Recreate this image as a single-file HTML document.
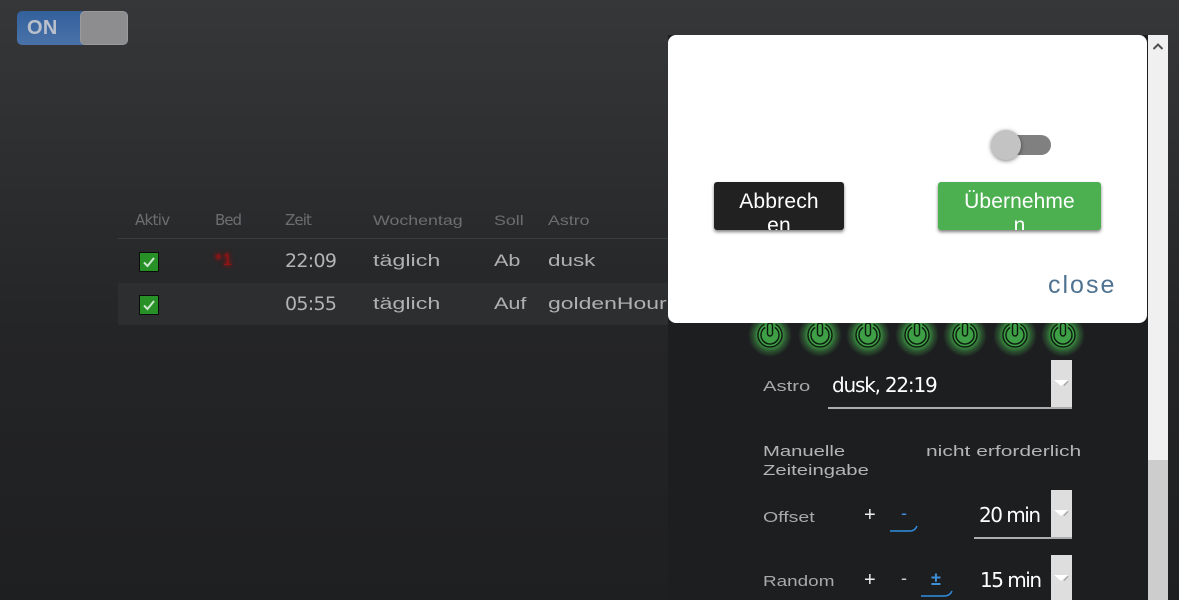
<!DOCTYPE html>
<html><head><meta charset="utf-8"><style>
html,body{margin:0;padding:0;width:1179px;height:600px;overflow:hidden;background:#1f2022}
#bg{position:absolute;left:0;top:0;width:1179px;height:600px;background:linear-gradient(#363739 0,#2b2c2e 200px,#242527 330px,#1e1f21 600px);overflow:hidden}
.t{position:absolute;white-space:nowrap;transform-origin:0 0;font-family:"Liberation Sans",sans-serif;line-height:20px}
.w{transform:scaleX(1.27)}
.r{transform:scaleX(1.37)}
.f{transform:scaleX(1.35);font-size:15px}
.s{font-family:"DejaVu Sans",sans-serif}
.m{letter-spacing:-1.500px}
.cb{position:absolute;left:139px;width:18px;height:18px;background:#279027;border:1px solid #0b0d0b;box-sizing:content-box}
.dd{position:absolute;left:1051px;width:21px;background:#dedede}
.dd:after{content:"";position:absolute;left:3px;top:20px;border-left:7px solid transparent;border-right:7px solid transparent;border-top:6px solid #fff}
.dd:before{content:"";position:absolute;left:12px;top:23px;width:6px;height:1px;background:#9a9a9a;transform:rotate(-45deg)}
</style></head><body><div id="bg">
<div style="position:absolute;left:17px;top:11px;width:111px;height:34px;border-radius:5px;background:linear-gradient(#33609c,#4a72a8);overflow:hidden;">
<div style="position:absolute;left:63px;top:0;width:48px;height:34px;background:#8d8d8f;border-radius:5px;box-sizing:border-box;border:1px solid #9a9a9a"></div></div>
<div class="t" style="left:27px;top:18px;font-size:20px;font-weight:bold;color:#b9c0cc;letter-spacing:.3px">ON</div>

<div style="position:absolute;left:118px;top:238px;width:550px;height:1px;background:#3c3d3f"></div>
<div style="position:absolute;left:118px;top:283px;width:550px;height:42px;background:#2d2e30"></div>

<div class="t s" style="left:135px;top:210px;font-size:15px;color:#6d6e70;letter-spacing:-.7px">Aktiv</div>
<div class="t s" style="left:215px;top:210px;font-size:15px;color:#6d6e70;letter-spacing:-1px">Bed</div>
<div class="t s" style="left:285px;top:210px;font-size:15px;color:#6d6e70;letter-spacing:-.9px">Zeit</div>
<div class="t w" style="left:373px;top:210px;font-size:14px;color:#6d6e70">Wochentag</div>
<div class="t w" style="left:494px;top:210px;font-size:14px;color:#6d6e70">Soll</div>
<div class="t w" style="left:548px;top:210px;font-size:14px;color:#6d6e70">Astro</div>

<div class="cb" style="top:252px"></div>
<svg style="position:absolute;left:139px;top:252px" width="20" height="20"><path d="M5 10.500L8.500 14L15 6" fill="none" stroke="#cfe6cf" stroke-width="2"/></svg>
<div class="cb" style="top:295px"></div>
<svg style="position:absolute;left:139px;top:295px" width="20" height="20"><path d="M5 10.500L8.500 14L15 6" fill="none" stroke="#cfe6cf" stroke-width="2"/></svg>
<div class="t" style="left:215px;top:250px;font-size:17px;color:#901414;letter-spacing:1px;text-shadow:0 0 6px #a01010,0 0 3px #a01010">*1</div>

<div class="t s" style="left:285px;top:251px;font-size:19px;color:#b3b3b3;letter-spacing:-.7px">22:09</div>
<div class="t s" style="left:285px;top:294px;font-size:19px;color:#b3b3b3;letter-spacing:-.7px">05:55</div>
<div class="t r" style="left:373px;top:251px;font-size:17px;color:#b0b0b0">täglich</div>
<div class="t r" style="left:373px;top:294px;font-size:17px;color:#b0b0b0">täglich</div>
<div class="t w" style="left:494px;top:251px;font-size:17px;color:#b0b0b0">Ab</div>
<div class="t w" style="left:494px;top:294px;font-size:17px;color:#b0b0b0">Auf</div>
<div class="t" style="left:548px;top:251px;font-size:17px;color:#b0b0b0;transform:scaleX(1.32)">dusk</div>
<div class="t" style="left:548px;top:294px;font-size:17px;color:#b0b0b0;transform:scaleX(1.35)">goldenHour</div>

<!-- panel -->
<div style="position:absolute;left:668px;top:35px;width:480px;height:565px;background:#1d1e20"></div>
<div style="position:absolute;left:1148px;top:35px;width:20px;height:565px;background:#f0f0f0"></div>
<div style="position:absolute;left:1148px;top:460px;width:20px;height:140px;background:#cdcdcd"></div>
<svg style="position:absolute;left:1148px;top:35px" width="20" height="20"><path d="M5.500 14L10 9.500L14.500 14" fill="none" stroke="#505050" stroke-width="2"/></svg>

<!-- power icons -->
<svg style="position:absolute;left:740px;top:310px" width="350" height="55" fill="none">
<defs><radialGradient id="g"><stop offset="0" stop-color="#3f9f46"/><stop offset=".5" stop-color="#3f9f46"/><stop offset=".75" stop-color="#3f9f46" stop-opacity=".4"/><stop offset="1" stop-color="#3f9f46" stop-opacity="0"/></radialGradient>
<g id="p"><circle r="22" fill="url(#g)"/><path d="M-5.500 -10.700A12 12 0 1 0 5.500 -10.700" stroke="#0d1a0f" stroke-width="1.400"/><path d="M-4.800 -7.600A9 9 0 1 0 4.800 -7.600" stroke="#0d1a0f" stroke-width="1.400"/><rect x="-2.500" y="-12" width="5" height="13" rx="2.500" stroke="#0d1a0f" stroke-width="1.400"/></g></defs>
<use href="#p" x="30" y="25"/><use href="#p" x="80" y="25"/><use href="#p" x="128" y="25"/><use href="#p" x="177" y="25"/><use href="#p" x="225" y="25"/><use href="#p" x="275" y="25"/><use href="#p" x="323" y="25"/>
</svg>

<!-- modal -->
<div style="position:absolute;left:668px;top:35px;width:479px;height:288px;background:#fff;border-radius:8px"></div>
<div style="position:absolute;left:992px;top:135px;width:59px;height:20px;border-radius:10px;background:#808080"></div>
<div style="position:absolute;left:991px;top:130px;width:30px;height:30px;border-radius:50%;background:#c3c3c3;box-shadow:0 1px 4px rgba(0,0,0,.5)"></div>
<div style="position:absolute;left:714px;top:182px;width:130px;height:48px;background:#212121;border-radius:3px;box-shadow:0 2px 3px rgba(0,0,0,.5);overflow:hidden;color:#fff;font:21px/24px 'Liberation Sans',sans-serif;letter-spacing:.2px;text-align:center;padding-top:8px;box-sizing:border-box">Abbrech<br>en</div>
<div style="position:absolute;left:938px;top:182px;width:163px;height:48px;background:#4caf50;border-radius:3px;box-shadow:0 2px 3px rgba(0,0,0,.5);overflow:hidden;color:#fff;font:21px/24px 'Liberation Sans',sans-serif;letter-spacing:.1px;text-align:center;padding-top:8px;box-sizing:border-box">Übernehme<br>n</div>
<div class="t" style="left:1048px;top:275px;font-size:25px;color:#4f7391;letter-spacing:2px">close</div>

<!-- form -->
<div class="t f" style="left:763px;top:377px;color:#a9a9a9">Astro</div>
<div class="t s" style="left:832px;top:375px;font-size:20px;color:#fff;letter-spacing:-1.200px">dusk, 22:19</div>
<div style="position:absolute;left:828px;top:407px;width:244px;height:2px;background:#adadad"></div>
<div class="dd" style="top:360px;height:47px"></div>

<div class="t f" style="left:763px;top:442px;color:#b5b5b5">Manuelle</div>
<div class="t f" style="left:763px;top:461px;color:#b5b5b5">Zeiteingabe</div>
<div class="t f" style="left:926px;top:442px;color:#b5b5b5;transform:scaleX(1.4)">nicht erforderlich</div>

<div class="t f" style="left:763px;top:508px;color:#a9a9a9;transform:scaleX(1.3)">Offset</div>
<div class="t" style="left:864px;top:505px;font-size:20px;color:#eee">+</div>
<div class="t" style="left:901px;top:503px;font-size:18px;color:#3f8fd8">-</div>
<svg style="position:absolute;left:888px;top:520px" width="32" height="14" fill="none"><path d="M2 11H22Q27 11 29 6" stroke="#2f8fe0" stroke-width="1.500"/></svg>
<div class="t s m" style="left:979px;top:505px;font-size:20px;color:#fff">20 min</div>
<div style="position:absolute;left:974px;top:537px;width:98px;height:2px;background:#adadad"></div>
<div class="dd" style="top:490px;height:47px"></div>

<div class="t f" style="left:763px;top:572px;color:#a9a9a9;transform:scaleX(1.26)">Random</div>
<div class="t" style="left:864px;top:570px;font-size:20px;color:#eee">+</div>
<div class="t" style="left:901px;top:568px;font-size:18px;color:#ccc">-</div>
<div class="t" style="left:931px;top:569px;font-size:18px;color:#3f8fd8;font-weight:bold">±</div>
<svg style="position:absolute;left:919px;top:585px" width="36" height="14" fill="none"><path d="M2 11H25Q31 11 33 6" stroke="#2f8fe0" stroke-width="1.500"/></svg>
<div class="t s m" style="left:980px;top:570px;font-size:20px;color:#fff">15 min</div>
<div class="dd" style="top:555px;height:45px"></div>
</div></body></html>
